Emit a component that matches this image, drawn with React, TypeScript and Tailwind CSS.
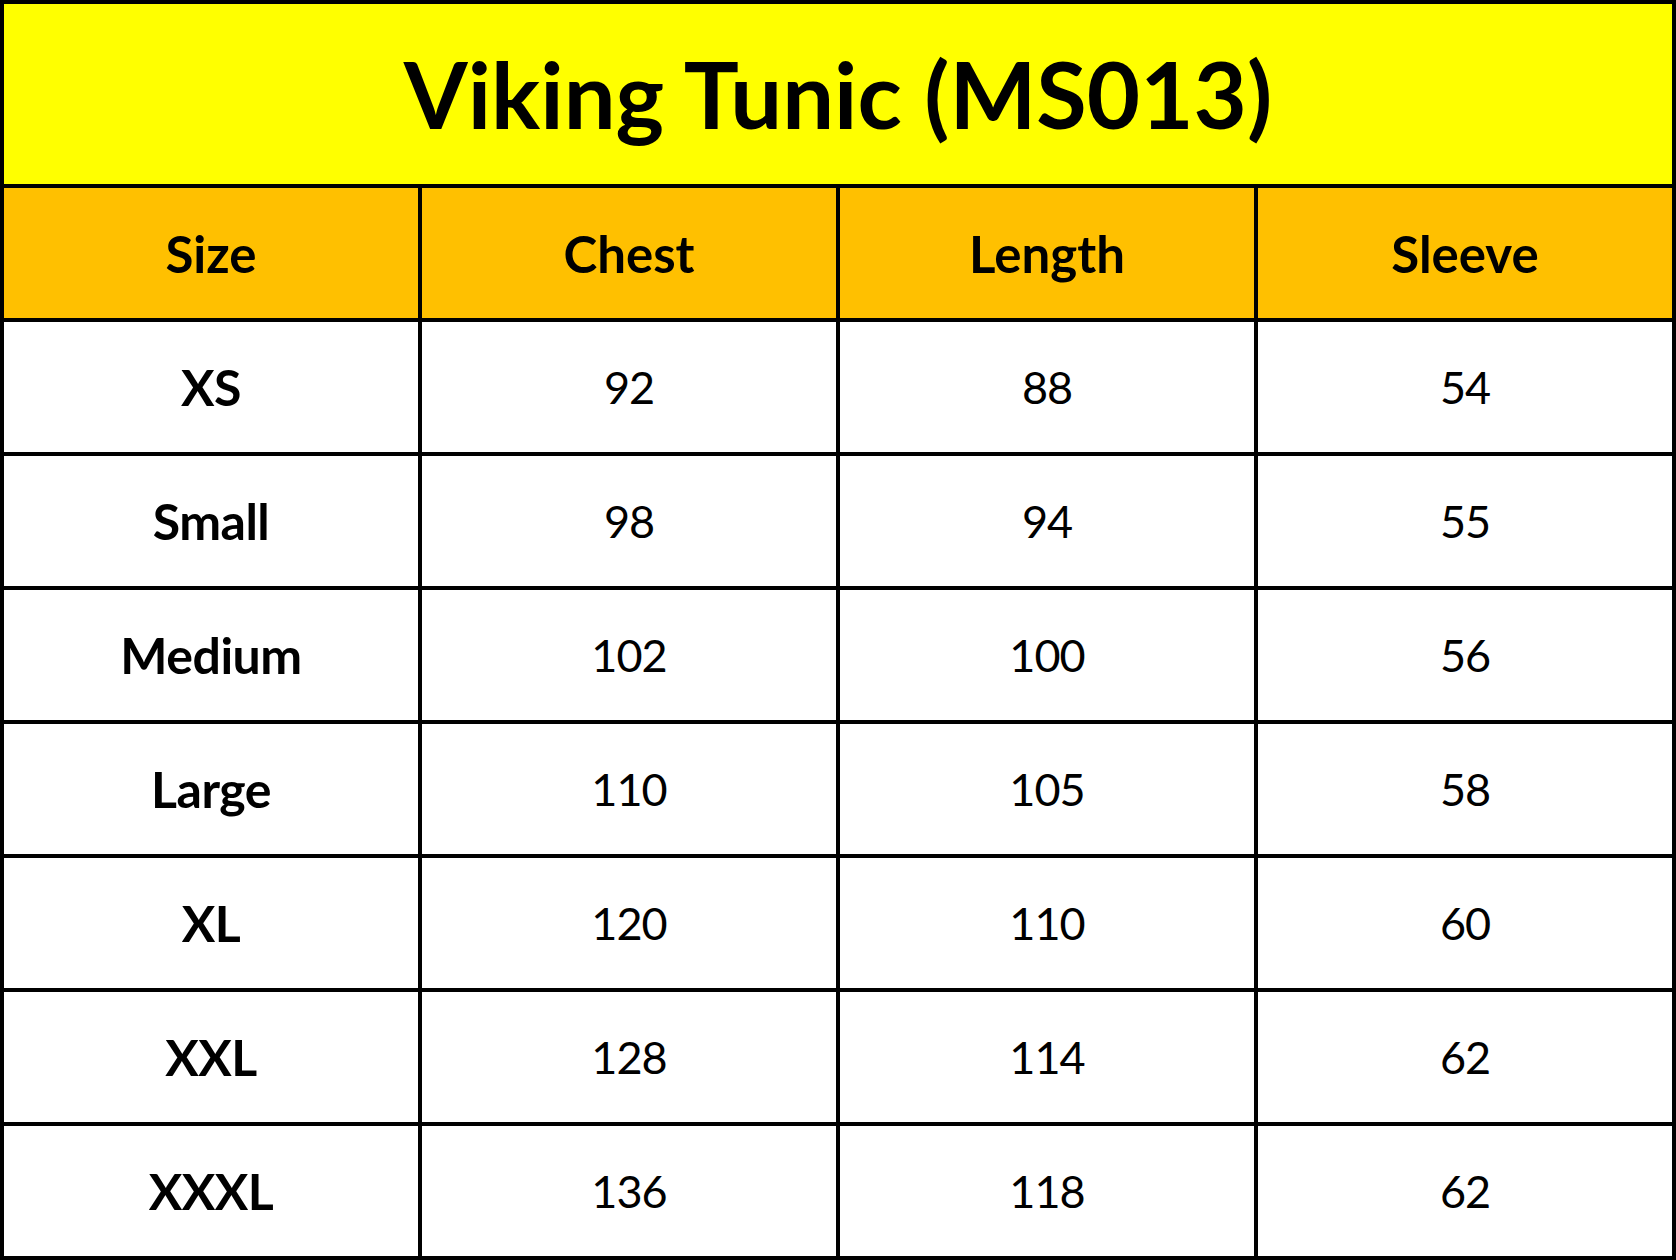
import React from "react";

const rows: [string, string, string, string][] = [
  ["XS", "92", "88", "54"],
  ["Small", "98", "94", "55"],
  ["Medium", "102", "100", "56"],
  ["Large", "110", "105", "58"],
  ["XL", "120", "110", "60"],
  ["XXL", "128", "114", "62"],
  ["XXXL", "136", "118", "62"],
];

const font = { fontFamily: "Lato, 'Open Sans', sans-serif" };

export default function App() {
  return (
    <div className="w-[1676px] h-[1260px] bg-black p-1" style={font}>
      <div className="grid grid-cols-4 gap-1 w-full">
        <div className="col-span-4 h-[180px] bg-[#ffff00] flex items-center justify-center">
          <span className="text-[92px] font-bold text-black leading-none">Viking Tunic (MS013)</span>
        </div>
        {["Size", "Chest", "Length", "Sleeve"].map((h) => (
          <div key={h} className="h-[130px] bg-[#ffc000] flex items-center justify-center">
            <span className="text-[51px] font-bold text-black leading-none">{h}</span>
          </div>
        ))}
        {rows.map((r) => (
          <React.Fragment key={r[0]}>
            <div className="h-[130px] bg-white flex items-center justify-center">
              <span className="text-[50px] font-bold text-black leading-none tracking-[-0.5px]">{r[0]}</span>
            </div>
            {r.slice(1).map((v, i) => (
              <div key={i} className="h-[130px] bg-white flex items-center justify-center">
                <span className="text-[45px] text-black leading-none tracking-[-1px]">{v}</span>
              </div>
            ))}
          </React.Fragment>
        ))}
      </div>
    </div>
  );
}
